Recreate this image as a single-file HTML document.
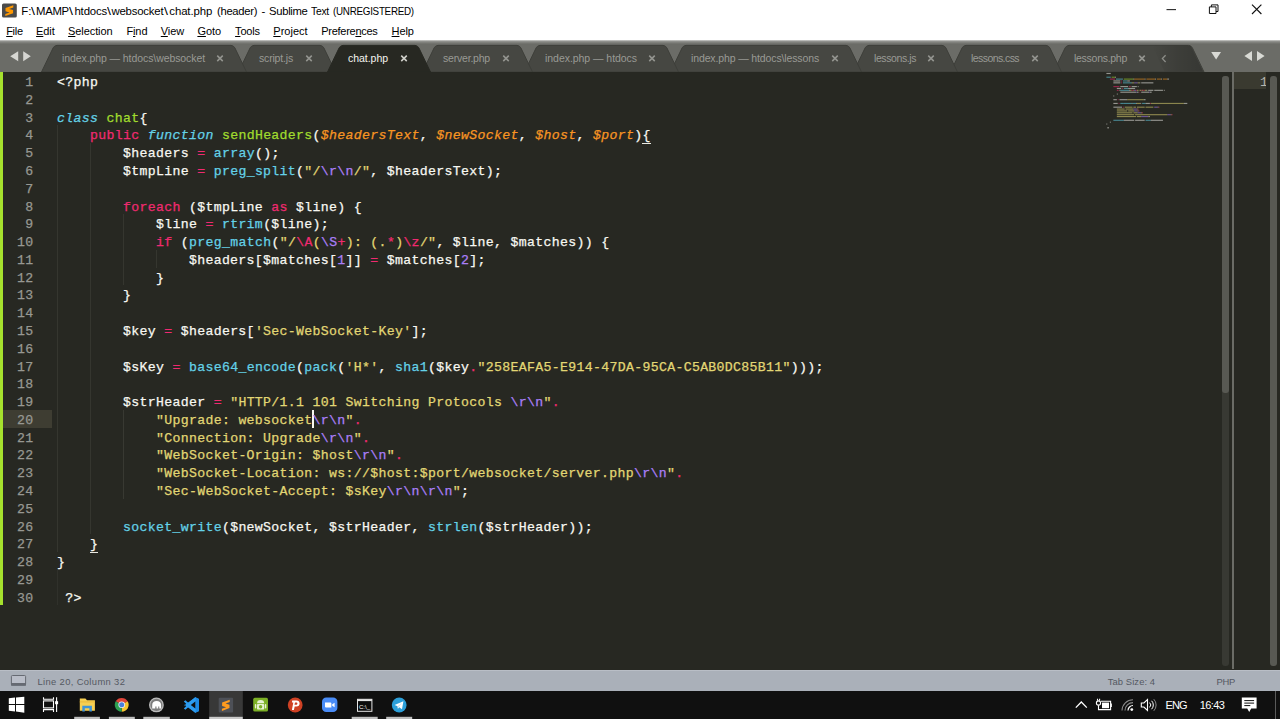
<!DOCTYPE html>
<html lang="en">
<head>
<meta charset="utf-8">
<title>F:\MAMP\htdocs\websocket\chat.php (header) - Sublime Text (UNREGISTERED)</title>
<style>
*{box-sizing:border-box;margin:0;padding:0}
html,body{width:1280px;height:719px;overflow:hidden;background:#272822}
body{position:relative;font-family:"Liberation Sans",sans-serif;-webkit-font-smoothing:antialiased}
.abs{position:absolute}
/* title bar */
#title{left:0;top:0;width:1280px;height:22px;background:#fff}
#title .t span{position:absolute;top:0;white-space:pre}
#title .t span.bs{transform:scaleX(1.25);transform-origin:0 0}
#title .t{left:21.3px;top:3.7px;font-size:11.4px;line-height:14px;color:#000;white-space:nowrap}
#menu{left:0;top:22px;width:1280px;height:18px;background:#fff;font-size:11px;color:#000}
#menu span{position:absolute;top:1.8px;line-height:14px;white-space:nowrap}
#menu u{text-decoration:underline;text-underline-offset:1px}
/* tab bar */
#tabbar{left:0;top:40px;width:1280px;height:32px;background:#6b6c67}
#tabbar .hl{left:0;top:0;width:1280px;height:3.5px;background:linear-gradient(#cfcfcd,#8b8c88 40%,#6b6c67)}
.tab{position:absolute;top:11px;font-size:10.5px;line-height:14px;color:#999a95;white-space:nowrap}
.tab.act{color:#f4f4f0}
.tx{position:absolute;top:10px;font-size:11px;line-height:14px;color:#a8a9a4}
/* editor */
#ed{left:0;top:72px;width:1280px;height:598px;background:#272822}
#green{left:0;top:0;width:3px;height:533px;background:#a5e12d}
.code{position:absolute;left:0;top:2.1px;-webkit-text-stroke:0.25px;z-index:1;font-family:"Liberation Mono",monospace;font-size:13.2px;letter-spacing:0.33px;line-height:17.78px;color:#f8f8f2;white-space:pre}
.ln{position:absolute;left:0;width:33.5px;text-align:right;color:#979892;height:17.78px}
.ln.cur{color:#979892}
.ul{position:relative;display:inline-block}
.ul::after{content:"";position:absolute;left:0;width:8.25px;top:15.6px;height:1px;background:#e8e8e2}
.l{position:absolute;left:57px;height:17.78px}
.k{color:#f02a70}.b{color:#64d2e8}.bi{color:#64d2e8;font-style:italic}.g{color:#a1dc2e}
.o{color:#f89522;font-style:italic}.s{color:#e2d774}.p{color:#aa7ff8}
.ig{position:absolute;width:1px;background:#34352f}
/* status */
#status{left:0;top:670px;width:1280px;height:21px;background:#aab0b9;box-shadow:inset 0 1px 0 #b9bec6;font-size:9.4px;color:#555962}
#status span{position:absolute;top:5.6px;line-height:12px;white-space:nowrap}
/* taskbar */
#task{left:0;top:691px;width:1280px;height:28px;background:#101010}
.tt{font-size:11px;line-height:14px;color:#fff;white-space:nowrap}
</style>
</head>
<body>
<div id="title" class="abs">
  <div class="t abs"><span style="left:-0.1px;letter-spacing:0.000px">F:</span><span class="bs" style="left:9.6px;letter-spacing:0.000px">\</span><span style="left:14.4px;letter-spacing:-0.300px;transform:scaleX(0.995);transform-origin:0 0">MAMP</span><span class="bs" style="left:47.9px;letter-spacing:0.000px">\</span><span style="left:53.1px;letter-spacing:-0.127px">htdocs</span><span class="bs" style="left:86.2px;letter-spacing:0.000px">\</span><span style="left:90.1px;letter-spacing:-0.192px">websocket</span><span class="bs" style="left:142.9px;letter-spacing:0.000px">\</span><span style="left:148.0px;letter-spacing:-0.100px">chat.php </span><span style="left:195.3px;letter-spacing:-0.300px;transform:scaleX(0.986);transform-origin:0 0">(header) </span><span style="left:240.3px;letter-spacing:-0.197px">- </span><span style="left:247.5px;letter-spacing:-0.300px;transform:scaleX(0.988);transform-origin:0 0">Sublime </span><span style="left:290.1px;letter-spacing:-0.300px;transform:scaleX(0.909);transform-origin:0 0">Text </span><span style="left:312.2px;letter-spacing:-0.300px;transform:scaleX(0.861);transform-origin:0 0">(UNREGISTERED)</span></div>
  <svg class="abs" style="left:0;top:0" width="1280" height="22" viewBox="0 0 1280 22">
  <rect x="2" y="3.4" width="14.8" height="14.2" rx="1.6" fill="#4b4b4b"/>
  <path d="M13.30 5.30 L5.50 7.90 L5.50 11.20 L9.60 12.40 L5.30 13.90 L5.30 16.00 L13.10 13.30 L13.10 10.00 L9.00 8.90 L13.30 7.50 Z" fill="#ff9800"/>
  <path d="M1166.5 9.65h9.5" stroke="#111" stroke-width="1" fill="none"/>
  <path d="M1209.4 6.9h6.6v6.6h-6.6zM1211.4 6.9v-2h6.6v6.6h-2" stroke="#111" stroke-width="1" fill="none"/>
  <path d="M1252 4.7l9.4 9.3M1261.4 4.7l-9.4 9.3" stroke="#111" stroke-width="1.15" fill="none"/>
</svg>

</div>
<div id="menu" class="abs">
<span style="left:6.2px;letter-spacing:-0.309px"><u>F</u>ile</span>
<span style="left:36.1px;letter-spacing:-0.117px"><u>E</u>dit</span>
<span style="left:68.1px;letter-spacing:-0.096px"><u>S</u>election</span>
<span style="left:126.4px;letter-spacing:-0.102px">F<u>i</u>nd</span>
<span style="left:160.8px;letter-spacing:-0.114px"><u>V</u>iew</span>
<span style="left:197.4px;letter-spacing:-0.065px"><u>G</u>oto</span>
<span style="left:235.1px;letter-spacing:-0.197px"><u>T</u>ools</span>
<span style="left:273.3px;letter-spacing:0.007px"><u>P</u>roject</span>
<span style="left:321.3px;letter-spacing:-0.283px">Prefere<u>n</u>ces</span>
<span style="left:391.6px;letter-spacing:-0.081px"><u>H</u>elp</span>
</div>
<div id="tabbar" class="abs">
  <div class="hl abs"></div>
  <svg class="abs" style="left:0;top:0" width="1280" height="32" viewBox="0 0 1280 32">
<defs><linearGradient id="tg" x1="0" x2="1" y1="0" y2="0"><stop offset="0" stop-color="#000" stop-opacity="0"/><stop offset="0.5" stop-color="#000" stop-opacity="0.13"/><stop offset="1" stop-color="#000" stop-opacity="0.22"/></linearGradient></defs>
<path d="M1053.50 32 L1065.10 7.9 Q1066.50 5.4,1069.00 5.4 L1188.50 5.4 Q1191.00 5.4,1192.40 7.9 L1204.00 32 Z" fill="#464742" stroke="#3d3e39" stroke-width="1"/>
<path d="M950.50 32 L962.10 7.9 Q963.50 5.4,966.00 5.4 L1046.00 5.4 Q1048.50 5.4,1049.90 7.9 L1061.50 32 Z" fill="#464742" stroke="#3d3e39" stroke-width="1"/>
<path d="M853.50 32 L865.10 7.9 Q866.50 5.4,869.00 5.4 L942.00 5.4 Q944.50 5.4,945.90 7.9 L957.50 32 Z" fill="#464742" stroke="#3d3e39" stroke-width="1"/>
<path d="M670.50 32 L682.10 7.9 Q683.50 5.4,686.00 5.4 L846.00 5.4 Q848.50 5.4,849.90 7.9 L861.50 32 Z" fill="#464742" stroke="#3d3e39" stroke-width="1"/>
<path d="M524.50 32 L536.10 7.9 Q537.50 5.4,540.00 5.4 L663.00 5.4 Q665.50 5.4,666.90 7.9 L678.50 32 Z" fill="#464742" stroke="#3d3e39" stroke-width="1"/>
<path d="M422.50 32 L434.10 7.9 Q435.50 5.4,438.00 5.4 L517.00 5.4 Q519.50 5.4,520.90 7.9 L532.50 32 Z" fill="#464742" stroke="#3d3e39" stroke-width="1"/>
<path d="M238.50 32 L250.10 7.9 Q251.50 5.4,254.00 5.4 L320.00 5.4 Q322.50 5.4,323.90 7.9 L335.50 32 Z" fill="#464742" stroke="#3d3e39" stroke-width="1"/>
<path d="M41.50 32 L53.10 7.9 Q54.50 5.4,57.00 5.4 L231.00 5.4 Q233.50 5.4,234.90 7.9 L246.50 32 Z" fill="#464742" stroke="#3d3e39" stroke-width="1"/>
<path d="M1152 5.5 L1190.5 5.5 L1203 31.5 L1164.5 31.5 Z" fill="url(#tg)"/>
<path d="M327.50 32 L339.10 7.9 Q340.50 5.4,343.00 5.4 L415.00 5.4 Q417.50 5.4,418.90 7.9 L430.50 32 Z" fill="#272822" stroke="#272822" stroke-width="1"/>
<path d="M217.25 15.649999999999999L222.75 21.15M222.75 15.649999999999999L217.25 21.15" stroke="#93948f" stroke-width="1.55" fill="none"/>
<path d="M306.25 15.649999999999999L311.75 21.15M311.75 15.649999999999999L306.25 21.15" stroke="#93948f" stroke-width="1.55" fill="none"/>
<path d="M401.25 15.649999999999999L406.75 21.15M406.75 15.649999999999999L401.25 21.15" stroke="#d0d0ca" stroke-width="1.55" fill="none"/>
<path d="M503.25 15.649999999999999L508.75 21.15M508.75 15.649999999999999L503.25 21.15" stroke="#93948f" stroke-width="1.55" fill="none"/>
<path d="M649.25 15.649999999999999L654.75 21.15M654.75 15.649999999999999L649.25 21.15" stroke="#93948f" stroke-width="1.55" fill="none"/>
<path d="M832.25 15.649999999999999L837.75 21.15M837.75 15.649999999999999L832.25 21.15" stroke="#93948f" stroke-width="1.55" fill="none"/>
<path d="M928.25 15.649999999999999L933.75 21.15M933.75 15.649999999999999L928.25 21.15" stroke="#93948f" stroke-width="1.55" fill="none"/>
<path d="M1032.25 15.649999999999999L1037.75 21.15M1037.75 15.649999999999999L1032.25 21.15" stroke="#93948f" stroke-width="1.55" fill="none"/>
<path d="M1139.25 15.649999999999999L1144.75 21.15M1144.75 15.649999999999999L1139.25 21.15" stroke="#93948f" stroke-width="1.55" fill="none"/>
<path d="M18.2 11.3v10l-8-5zM23.2 11.3v10l7.6-5z" fill="#d6d6d2"/>
<path d="M1165.6 15.2l-3.2 3.4l3.2 3.4" stroke="#8d8e89" stroke-width="1.3" fill="none"/>
<path d="M1211.2 12h9.8l-4.9 7.5z" fill="#d9dad5"/>
<path d="M1252 11v10l-7.6-5zM1257 11v10l7.6-5z" fill="#d9dad5"/>
</svg>
<div class="tab" style="left:62px;letter-spacing:-0.084px">index.php — htdocs\websocket</div>
<div class="tab" style="left:259px;letter-spacing:-0.177px">script.js</div>
<div class="tab act" style="left:348px;letter-spacing:-0.037px">chat.php</div>
<div class="tab" style="left:443px;letter-spacing:-0.203px">server.php</div>
<div class="tab" style="left:545px;letter-spacing:-0.045px">index.php — htdocs</div>
<div class="tab" style="left:691px;letter-spacing:-0.128px">index.php — htdocs\lessons</div>
<div class="tab" style="left:874px;letter-spacing:-0.411px">lessons.js</div>
<div class="tab" style="left:971px;letter-spacing:-0.571px">lessons.css</div>
<div class="tab" style="left:1074px;letter-spacing:-0.277px">lessons.php</div>
</div>
<div id="ed" class="abs">
  <div id="green" class="abs"></div>
  <div class="code">
<div class="ln" style="top:0.00px">1</div>
<div class="l" style="top:0.00px">&lt;?php</div>
<div class="ln" style="top:17.78px">2</div>
<div class="ln" style="top:35.56px">3</div>
<div class="l" style="top:35.56px"><span class="bi">class</span> <span class="g">chat</span>{</div>
<div class="ln" style="top:53.34px">4</div>
<div class="l" style="top:53.34px">    <span class="k">public</span> <span class="bi">function</span> <span class="g">sendHeaders</span>(<span class="o">$headersText</span>, <span class="o">$newSocket</span>, <span class="o">$host</span>, <span class="o">$port</span>)<span class="ul">{</span></div>
<div class="ln" style="top:71.12px">5</div>
<div class="l" style="top:71.12px">        $headers <span class="k">=</span> <span class="b">array</span>();</div>
<div class="ln" style="top:88.90px">6</div>
<div class="l" style="top:88.90px">        $tmpLine <span class="k">=</span> <span class="b">preg_split</span>(<span class="s">"/</span><span class="p">\r\n</span><span class="s">/"</span>, $headersText);</div>
<div class="ln" style="top:106.68px">7</div>
<div class="ln" style="top:124.46px">8</div>
<div class="l" style="top:124.46px">        <span class="k">foreach</span> ($tmpLine <span class="k">as</span> $line) {</div>
<div class="ln" style="top:142.24px">9</div>
<div class="l" style="top:142.24px">            $line <span class="k">=</span> <span class="b">rtrim</span>($line);</div>
<div class="ln" style="top:160.02px">10</div>
<div class="l" style="top:160.02px">            <span class="k">if</span> (<span class="b">preg_match</span>(<span class="s">"/</span><span class="k">\A</span><span class="s">(</span><span class="p">\S</span><span class="k">+</span><span class="s">): (.</span><span class="k">*</span><span class="s">)</span><span class="k">\z</span><span class="s">/"</span>, $line, $matches)) {</div>
<div class="ln" style="top:177.80px">11</div>
<div class="l" style="top:177.80px">                $headers[$matches[<span class="p">1</span>]] <span class="k">=</span> $matches[<span class="p">2</span>];</div>
<div class="ln" style="top:195.58px">12</div>
<div class="l" style="top:195.58px">            }</div>
<div class="ln" style="top:213.36px">13</div>
<div class="l" style="top:213.36px">        }</div>
<div class="ln" style="top:231.14px">14</div>
<div class="ln" style="top:248.92px">15</div>
<div class="l" style="top:248.92px">        $key <span class="k">=</span> $headers[<span class="s">'Sec-WebSocket-Key'</span>];</div>
<div class="ln" style="top:266.70px">16</div>
<div class="ln" style="top:284.48px">17</div>
<div class="l" style="top:284.48px">        $sKey <span class="k">=</span> <span class="b">base</span><span class="b">64_encode</span>(<span class="b">pack</span>(<span class="s">'H*'</span>, <span class="b">sha1</span>($key<span class="k">.</span><span class="s">"258EAFA5-E914-47DA-95CA-C5AB0DC85B11"</span>)));</div>
<div class="ln" style="top:302.26px">18</div>
<div class="ln" style="top:320.04px">19</div>
<div class="l" style="top:320.04px">        $strHeader <span class="k">=</span> <span class="s">"HTTP/1.1 101 Switching Protocols </span><span class="p">\r\n</span><span class="s">"</span><span class="k">.</span></div>
<div class="ln cur" style="top:337.82px">20</div>
<div class="l" style="top:337.82px">            <span class="s">"Upgrade: websocket</span><span class="p">\r\n</span><span class="s">"</span><span class="k">.</span></div>
<div class="ln" style="top:355.60px">21</div>
<div class="l" style="top:355.60px">            <span class="s">"Connection: Upgrade</span><span class="p">\r\n</span><span class="s">"</span><span class="k">.</span></div>
<div class="ln" style="top:373.38px">22</div>
<div class="l" style="top:373.38px">            <span class="s">"WebSocket-Origin: $host</span><span class="p">\r\n</span><span class="s">"</span><span class="k">.</span></div>
<div class="ln" style="top:391.16px">23</div>
<div class="l" style="top:391.16px">            <span class="s">"WebSocket-Location: ws://$host:$port/websocket/server.php</span><span class="p">\r\n</span><span class="s">"</span><span class="k">.</span></div>
<div class="ln" style="top:408.94px">24</div>
<div class="l" style="top:408.94px">            <span class="s">"Sec-WebSocket-Accept: $sKey</span><span class="p">\r\n\r\n</span><span class="s">"</span>;</div>
<div class="ln" style="top:426.72px">25</div>
<div class="ln" style="top:444.50px">26</div>
<div class="l" style="top:444.50px">        <span class="b">socket_write</span>($newSocket, $strHeader, <span class="b">strlen</span>($strHeader));</div>
<div class="ln" style="top:462.28px">27</div>
<div class="l" style="top:462.28px">    <span class="ul">}</span></div>
<div class="ln" style="top:480.06px">28</div>
<div class="l" style="top:480.06px">}</div>
<div class="ln" style="top:497.84px">29</div>
<div class="ln" style="top:515.62px">30</div>
<div class="l" style="top:515.62px"> ?&gt;</div>
</div>
<svg class="abs" style="left:0;top:0" width="1222" height="70" viewBox="0 0 1222 70">
<rect x="1106.40" y="0.90" width="4.35" height="1.15" fill="#f8f8f2" opacity="0.52"/>
<rect x="1106.40" y="4.65" width="4.35" height="1.15" fill="#66d9ef" opacity="0.52"/>
<rect x="1111.62" y="4.65" width="3.48" height="1.15" fill="#a6e22e" opacity="0.52"/>
<rect x="1115.10" y="4.65" width="0.87" height="1.15" fill="#f8f8f2" opacity="0.52"/>
<rect x="1109.88" y="6.52" width="5.22" height="1.15" fill="#f92672" opacity="0.52"/>
<rect x="1115.97" y="6.52" width="6.96" height="1.15" fill="#66d9ef" opacity="0.52"/>
<rect x="1123.80" y="6.52" width="9.57" height="1.15" fill="#a6e22e" opacity="0.52"/>
<rect x="1133.37" y="6.52" width="0.87" height="1.15" fill="#f8f8f2" opacity="0.52"/>
<rect x="1134.24" y="6.52" width="10.44" height="1.15" fill="#fd971f" opacity="0.52"/>
<rect x="1144.68" y="6.52" width="0.87" height="1.15" fill="#f8f8f2" opacity="0.52"/>
<rect x="1146.42" y="6.52" width="8.70" height="1.15" fill="#fd971f" opacity="0.52"/>
<rect x="1155.12" y="6.52" width="0.87" height="1.15" fill="#f8f8f2" opacity="0.52"/>
<rect x="1156.86" y="6.52" width="4.35" height="1.15" fill="#fd971f" opacity="0.52"/>
<rect x="1161.21" y="6.52" width="0.87" height="1.15" fill="#f8f8f2" opacity="0.52"/>
<rect x="1162.95" y="6.52" width="4.35" height="1.15" fill="#fd971f" opacity="0.52"/>
<rect x="1167.30" y="6.52" width="0.87" height="1.15" fill="#f8f8f2" opacity="0.52"/>
<rect x="1168.17" y="6.52" width="0.87" height="1.15" fill="#f8f8f2" opacity="0.52"/>
<rect x="1113.36" y="8.39" width="6.96" height="1.15" fill="#f8f8f2" opacity="0.52"/>
<rect x="1121.19" y="8.39" width="0.87" height="1.15" fill="#f92672" opacity="0.52"/>
<rect x="1122.93" y="8.39" width="4.35" height="1.15" fill="#66d9ef" opacity="0.52"/>
<rect x="1127.28" y="8.39" width="2.61" height="1.15" fill="#f8f8f2" opacity="0.52"/>
<rect x="1113.36" y="10.27" width="6.96" height="1.15" fill="#f8f8f2" opacity="0.52"/>
<rect x="1121.19" y="10.27" width="0.87" height="1.15" fill="#f92672" opacity="0.52"/>
<rect x="1122.93" y="10.27" width="8.70" height="1.15" fill="#66d9ef" opacity="0.52"/>
<rect x="1131.63" y="10.27" width="0.87" height="1.15" fill="#f8f8f2" opacity="0.52"/>
<rect x="1132.50" y="10.27" width="1.74" height="1.15" fill="#e6db74" opacity="0.52"/>
<rect x="1134.24" y="10.27" width="3.48" height="1.15" fill="#ae81ff" opacity="0.52"/>
<rect x="1137.72" y="10.27" width="1.74" height="1.15" fill="#e6db74" opacity="0.52"/>
<rect x="1139.46" y="10.27" width="0.87" height="1.15" fill="#f8f8f2" opacity="0.52"/>
<rect x="1141.20" y="10.27" width="12.18" height="1.15" fill="#f8f8f2" opacity="0.52"/>
<rect x="1113.36" y="14.01" width="6.09" height="1.15" fill="#f92672" opacity="0.52"/>
<rect x="1120.32" y="14.01" width="7.83" height="1.15" fill="#f8f8f2" opacity="0.52"/>
<rect x="1129.02" y="14.01" width="1.74" height="1.15" fill="#f92672" opacity="0.52"/>
<rect x="1131.63" y="14.01" width="5.22" height="1.15" fill="#f8f8f2" opacity="0.52"/>
<rect x="1137.72" y="14.01" width="0.87" height="1.15" fill="#f8f8f2" opacity="0.52"/>
<rect x="1116.84" y="15.88" width="4.35" height="1.15" fill="#f8f8f2" opacity="0.52"/>
<rect x="1122.06" y="15.88" width="0.87" height="1.15" fill="#f92672" opacity="0.52"/>
<rect x="1123.80" y="15.88" width="4.35" height="1.15" fill="#66d9ef" opacity="0.52"/>
<rect x="1128.15" y="15.88" width="6.96" height="1.15" fill="#f8f8f2" opacity="0.52"/>
<rect x="1116.84" y="17.76" width="1.74" height="1.15" fill="#f92672" opacity="0.52"/>
<rect x="1119.45" y="17.76" width="0.87" height="1.15" fill="#f8f8f2" opacity="0.52"/>
<rect x="1120.32" y="17.76" width="8.70" height="1.15" fill="#66d9ef" opacity="0.52"/>
<rect x="1129.02" y="17.76" width="0.87" height="1.15" fill="#f8f8f2" opacity="0.52"/>
<rect x="1129.89" y="17.76" width="1.74" height="1.15" fill="#e6db74" opacity="0.52"/>
<rect x="1131.63" y="17.76" width="1.74" height="1.15" fill="#f92672" opacity="0.52"/>
<rect x="1133.37" y="17.76" width="0.87" height="1.15" fill="#e6db74" opacity="0.52"/>
<rect x="1134.24" y="17.76" width="1.74" height="1.15" fill="#ae81ff" opacity="0.52"/>
<rect x="1135.98" y="17.76" width="0.87" height="1.15" fill="#f92672" opacity="0.52"/>
<rect x="1136.85" y="17.76" width="1.74" height="1.15" fill="#e6db74" opacity="0.52"/>
<rect x="1139.46" y="17.76" width="1.74" height="1.15" fill="#e6db74" opacity="0.52"/>
<rect x="1141.20" y="17.76" width="0.87" height="1.15" fill="#f92672" opacity="0.52"/>
<rect x="1142.07" y="17.76" width="0.87" height="1.15" fill="#e6db74" opacity="0.52"/>
<rect x="1142.94" y="17.76" width="1.74" height="1.15" fill="#f92672" opacity="0.52"/>
<rect x="1144.68" y="17.76" width="1.74" height="1.15" fill="#e6db74" opacity="0.52"/>
<rect x="1146.42" y="17.76" width="0.87" height="1.15" fill="#f8f8f2" opacity="0.52"/>
<rect x="1148.16" y="17.76" width="5.22" height="1.15" fill="#f8f8f2" opacity="0.52"/>
<rect x="1154.25" y="17.76" width="8.70" height="1.15" fill="#f8f8f2" opacity="0.52"/>
<rect x="1163.82" y="17.76" width="0.87" height="1.15" fill="#f8f8f2" opacity="0.52"/>
<rect x="1120.32" y="19.63" width="15.66" height="1.15" fill="#f8f8f2" opacity="0.52"/>
<rect x="1135.98" y="19.63" width="0.87" height="1.15" fill="#ae81ff" opacity="0.52"/>
<rect x="1136.85" y="19.63" width="1.74" height="1.15" fill="#f8f8f2" opacity="0.52"/>
<rect x="1139.46" y="19.63" width="0.87" height="1.15" fill="#f92672" opacity="0.52"/>
<rect x="1141.20" y="19.63" width="7.83" height="1.15" fill="#f8f8f2" opacity="0.52"/>
<rect x="1149.03" y="19.63" width="0.87" height="1.15" fill="#ae81ff" opacity="0.52"/>
<rect x="1149.90" y="19.63" width="1.74" height="1.15" fill="#f8f8f2" opacity="0.52"/>
<rect x="1116.84" y="21.50" width="0.87" height="1.15" fill="#f8f8f2" opacity="0.52"/>
<rect x="1113.36" y="23.38" width="0.87" height="1.15" fill="#f8f8f2" opacity="0.52"/>
<rect x="1113.36" y="27.12" width="3.48" height="1.15" fill="#f8f8f2" opacity="0.52"/>
<rect x="1117.71" y="27.12" width="0.87" height="1.15" fill="#f92672" opacity="0.52"/>
<rect x="1119.45" y="27.12" width="7.83" height="1.15" fill="#f8f8f2" opacity="0.52"/>
<rect x="1127.28" y="27.12" width="16.53" height="1.15" fill="#e6db74" opacity="0.52"/>
<rect x="1143.81" y="27.12" width="1.74" height="1.15" fill="#f8f8f2" opacity="0.52"/>
<rect x="1113.36" y="30.87" width="4.35" height="1.15" fill="#f8f8f2" opacity="0.52"/>
<rect x="1118.58" y="30.87" width="0.87" height="1.15" fill="#f92672" opacity="0.52"/>
<rect x="1120.32" y="30.87" width="3.48" height="1.15" fill="#66d9ef" opacity="0.52"/>
<rect x="1123.80" y="30.87" width="7.83" height="1.15" fill="#66d9ef" opacity="0.52"/>
<rect x="1131.63" y="30.87" width="0.87" height="1.15" fill="#f8f8f2" opacity="0.52"/>
<rect x="1132.50" y="30.87" width="3.48" height="1.15" fill="#66d9ef" opacity="0.52"/>
<rect x="1135.98" y="30.87" width="0.87" height="1.15" fill="#f8f8f2" opacity="0.52"/>
<rect x="1136.85" y="30.87" width="3.48" height="1.15" fill="#e6db74" opacity="0.52"/>
<rect x="1140.33" y="30.87" width="0.87" height="1.15" fill="#f8f8f2" opacity="0.52"/>
<rect x="1142.07" y="30.87" width="3.48" height="1.15" fill="#66d9ef" opacity="0.52"/>
<rect x="1145.55" y="30.87" width="4.35" height="1.15" fill="#f8f8f2" opacity="0.52"/>
<rect x="1149.90" y="30.87" width="0.87" height="1.15" fill="#f92672" opacity="0.52"/>
<rect x="1150.77" y="30.87" width="33.06" height="1.15" fill="#e6db74" opacity="0.52"/>
<rect x="1183.83" y="30.87" width="3.48" height="1.15" fill="#f8f8f2" opacity="0.52"/>
<rect x="1113.36" y="34.61" width="8.70" height="1.15" fill="#f8f8f2" opacity="0.52"/>
<rect x="1122.93" y="34.61" width="0.87" height="1.15" fill="#f92672" opacity="0.52"/>
<rect x="1124.67" y="34.61" width="7.83" height="1.15" fill="#e6db74" opacity="0.52"/>
<rect x="1133.37" y="34.61" width="2.61" height="1.15" fill="#e6db74" opacity="0.52"/>
<rect x="1136.85" y="34.61" width="7.83" height="1.15" fill="#e6db74" opacity="0.52"/>
<rect x="1145.55" y="34.61" width="7.83" height="1.15" fill="#e6db74" opacity="0.52"/>
<rect x="1154.25" y="34.61" width="3.48" height="1.15" fill="#ae81ff" opacity="0.52"/>
<rect x="1157.73" y="34.61" width="0.87" height="1.15" fill="#e6db74" opacity="0.52"/>
<rect x="1158.60" y="34.61" width="0.87" height="1.15" fill="#f92672" opacity="0.52"/>
<rect x="1116.84" y="36.49" width="7.83" height="1.15" fill="#e6db74" opacity="0.52"/>
<rect x="1125.54" y="36.49" width="7.83" height="1.15" fill="#e6db74" opacity="0.52"/>
<rect x="1133.37" y="36.49" width="3.48" height="1.15" fill="#ae81ff" opacity="0.52"/>
<rect x="1136.85" y="36.49" width="0.87" height="1.15" fill="#e6db74" opacity="0.52"/>
<rect x="1137.72" y="36.49" width="0.87" height="1.15" fill="#f92672" opacity="0.52"/>
<rect x="1116.84" y="38.36" width="10.44" height="1.15" fill="#e6db74" opacity="0.52"/>
<rect x="1128.15" y="38.36" width="6.09" height="1.15" fill="#e6db74" opacity="0.52"/>
<rect x="1134.24" y="38.36" width="3.48" height="1.15" fill="#ae81ff" opacity="0.52"/>
<rect x="1137.72" y="38.36" width="0.87" height="1.15" fill="#e6db74" opacity="0.52"/>
<rect x="1138.59" y="38.36" width="0.87" height="1.15" fill="#f92672" opacity="0.52"/>
<rect x="1116.84" y="40.23" width="15.66" height="1.15" fill="#e6db74" opacity="0.52"/>
<rect x="1133.37" y="40.23" width="4.35" height="1.15" fill="#e6db74" opacity="0.52"/>
<rect x="1137.72" y="40.23" width="3.48" height="1.15" fill="#ae81ff" opacity="0.52"/>
<rect x="1141.20" y="40.23" width="0.87" height="1.15" fill="#e6db74" opacity="0.52"/>
<rect x="1142.07" y="40.23" width="0.87" height="1.15" fill="#f92672" opacity="0.52"/>
<rect x="1116.84" y="42.11" width="17.40" height="1.15" fill="#e6db74" opacity="0.52"/>
<rect x="1135.11" y="42.11" width="32.19" height="1.15" fill="#e6db74" opacity="0.52"/>
<rect x="1167.30" y="42.11" width="3.48" height="1.15" fill="#ae81ff" opacity="0.52"/>
<rect x="1170.78" y="42.11" width="0.87" height="1.15" fill="#e6db74" opacity="0.52"/>
<rect x="1171.65" y="42.11" width="0.87" height="1.15" fill="#f92672" opacity="0.52"/>
<rect x="1116.84" y="43.98" width="19.14" height="1.15" fill="#e6db74" opacity="0.52"/>
<rect x="1136.85" y="43.98" width="4.35" height="1.15" fill="#e6db74" opacity="0.52"/>
<rect x="1141.20" y="43.98" width="6.96" height="1.15" fill="#ae81ff" opacity="0.52"/>
<rect x="1148.16" y="43.98" width="0.87" height="1.15" fill="#e6db74" opacity="0.52"/>
<rect x="1149.03" y="43.98" width="0.87" height="1.15" fill="#f8f8f2" opacity="0.52"/>
<rect x="1113.36" y="47.73" width="10.44" height="1.15" fill="#66d9ef" opacity="0.52"/>
<rect x="1123.80" y="47.73" width="10.44" height="1.15" fill="#f8f8f2" opacity="0.52"/>
<rect x="1135.11" y="47.73" width="9.57" height="1.15" fill="#f8f8f2" opacity="0.52"/>
<rect x="1145.55" y="47.73" width="5.22" height="1.15" fill="#66d9ef" opacity="0.52"/>
<rect x="1150.77" y="47.73" width="12.18" height="1.15" fill="#f8f8f2" opacity="0.52"/>
<rect x="1109.88" y="49.60" width="0.87" height="1.15" fill="#f8f8f2" opacity="0.52"/>
<rect x="1106.40" y="51.47" width="0.87" height="1.15" fill="#f8f8f2" opacity="0.52"/>
<rect x="1107.27" y="55.22" width="1.74" height="1.15" fill="#f8f8f2" opacity="0.52"/>
</svg><div class="abs" style="left:3px;top:337.82px;width:49px;height:17.78px;background:#3e3d32;z-index:0"></div>
<div class="ig" style="left:57px;top:53.34px;height:426.72px;background:#35362f"></div>
<div class="ig" style="left:57px;top:497.84px;height:35.56px;background:#30312b"></div>
<div class="ig" style="left:90px;top:71.12px;height:391.16px;background:#35362f"></div>
<div class="ig" style="left:123px;top:142.24px;height:71.12px;background:#35362f"></div>
<div class="ig" style="left:123px;top:337.82px;height:88.90px;background:#383932"></div>
<div class="ig" style="left:156px;top:177.80px;height:17.78px;background:#35362f"></div>
<div class="abs" style="left:312.3px;top:338.12px;width:1.6px;height:18.38px;background:#f8f8f0"></div>
<div class="abs" style="left:1221.5px;top:3.5px;width:7.5px;height:590px;background:#383933;border-radius:3px"></div>
<div class="abs" style="left:1222px;top:3.5px;width:6.5px;height:317px;background:#585953;border-radius:3px"></div>
<div class="abs" style="left:1232px;top:0;width:2px;height:597px;background:#6b6c66"></div>
<div class="abs" style="left:1234px;top:0;width:32.3px;height:17px;background:#3a3a30"></div>
<div class="abs" style="left:1250px;top:2.1px;width:16.3px;height:17.76px;overflow:hidden;font-family:'Liberation Mono',monospace;font-size:13.2px;line-height:17.78px;color:#b4b4ae;text-align:left;padding-left:10px">1</div>
<div class="abs" style="left:1270px;top:3.5px;width:6.5px;height:590px;background:#585953;border-radius:3px"></div>
</div>
<div id="status" class="abs">
<span style="left:37.4px;letter-spacing:0.366px">Line 20, Column 32</span>
<span style="left:1107.7px;letter-spacing:0.101px">Tab Size: 4</span>
<span style="left:1216.4px;letter-spacing:-0.160px">PHP</span><svg class="abs" style="left:0;top:0" width="40" height="21" viewBox="0 670 40 21"><rect x="11.4" y="675.5" width="14.2" height="9.6" rx="1" fill="#b9bdc7" stroke="#666a72" stroke-width="1"/><rect x="11" y="683" width="15" height="2.7" fill="#666a72"/></svg>

</div>
<div id="task" class="abs">
  <svg class="abs" style="left:0;top:0" width="1280" height="28" viewBox="0 691 1280 28">
  <!-- active button bg -->
  <rect x="209.2" y="691" width="33.6" height="26" fill="#383838"/>
  <!-- running indicators -->
  <g fill="#bdbdbd">
    <rect x="74.2" y="716.8" width="25.7" height="2.2"/>
    <rect x="108.9" y="716.8" width="25.9" height="2.2"/>
    <rect x="143.3" y="716.8" width="26.5" height="2.2"/>
    <rect x="209.2" y="716.8" width="33.6" height="2.2" fill="#c9c9c9"/>
    <rect x="351.7" y="716.8" width="26" height="2.2"/>
    <rect x="386.2" y="716.8" width="26" height="2.2"/>
  </g>
  <!-- windows logo -->
  <g fill="#fff">
    <path d="M8.8 698.3 L15 697.5 L15 704 L8.8 704 Z"/>
    <path d="M16 697.4 L24.3 696.8 L24.3 704 L16 704 Z"/>
    <path d="M8.8 704.9 L15 704.9 L15 711.5 L8.8 710.7 Z"/>
    <path d="M16 704.9 L24.3 704.9 L24.3 712.7 L16 711.6 Z"/>
  </g>
  <!-- task view -->
  <g stroke="#fff" stroke-width="1.1" fill="none">
    <rect x="43.5" y="700.9" width="10" height="7"/>
    <path d="M43.5 697.2v2.1h10v-2.1M43.5 712v-2.4h10v2.4M56.6 697.2v14.8"/>
  </g>
  <rect x="55.1" y="701.2" width="3" height="3" fill="#fff"/>
  <!-- file explorer -->
  <path d="M79.8 698.6 h5.6 l1.6 1.6 h7.9 v10.6 h-15.1 z" fill="#f7cf52"/>
  <path d="M79.8 701.4 h15.1 v1 h-15.1z" fill="#e9b93c"/>
  <path d="M82.3 705.7 h9.6 v5.9 h-2.5 v-3.3 h-4.6 v3.3 h-2.5 z" fill="#3f94d8"/>
  <!-- chrome -->
  <g>
    <path d="M121.7 704.8 L115.72 701.35 A6.9 6.9 0 0 1 127.68 701.35 Z" fill="#e0453a"/>
    <path d="M121.7 704.8 L127.68 701.35 A6.9 6.9 0 0 1 121.7 711.7 Z" fill="#f7c531"/>
    <path d="M121.7 704.8 L121.7 711.7 A6.9 6.9 0 0 1 115.72 701.35 Z" fill="#2d9f51"/>
    <path d="M121.7 701.5 L128.2 701.5 L127.68 701.35 L121.7 700.5 Z" fill="#e0453a"/>
    <circle cx="121.7" cy="704.8" r="3.3" fill="#eef3f8"/>
    <circle cx="121.7" cy="704.8" r="2.5" fill="#4a7fdc"/>
  </g>
  <!-- MAMP -->
  <circle cx="156.4" cy="704.9" r="7.4" fill="#bcbcbc"/>
  <circle cx="156.4" cy="704.9" r="6.1" fill="#7d7d7d"/>
  <path d="M152.2 708.4 v-3.4 c0-2.7 1.9-4.1 4.4-4.1 c2.7 0 4.5 1.5 4.5 3.9 v3.6 h-1.8 v-1.9 h-1.1 v1.9 h-1.7 v-1.9 h-1.2 v1.9 z" fill="#fff"/>
  <!-- VS Code -->
  <path d="M195.3 697.3 L199 699 V711 L195.3 712.7 L184 704.6 L184 705.4 Z" fill="#2d9cf0"/>
  <path d="M195.3 697.3 L199 699 V711 L195.3 712.7 Z" fill="#1d8ae4"/>
  <path d="M195.3 697.3 L186.6 705 L195.3 712.7 L195.3 709 L190.6 705 L195.3 701 Z" fill="#2d9cf0"/>
  <path d="M183.8 701.6 l1.6 -1.3 l10 8.7 v3.7 z M183.8 708.4 l1.6 1.3 l10 -8.7 v-3.7 z" fill="#2d9cf0"/>
  <path d="M195.3 701.4 L190.8 705 L195.3 708.6 Z" fill="#101010"/>
  <!-- sublime -->
  <rect x="218.7" y="697.8" width="14.4" height="14.8" rx="1" fill="#4d5057"/>
  <path d="M229.69 699.78 L222.11 702.49 L222.11 705.93 L226.09 707.18 L221.91 708.74 L221.91 710.93 L229.50 708.12 L229.50 704.68 L225.51 703.53 L229.69 702.07 Z" fill="#ff9b1f"/>
  <!-- android green -->
  <rect x="253.2" y="697.8" width="14.8" height="13.8" rx="1.6" fill="#7cb026"/>
  <path d="M257 703.3 a3.6 3.4 0 0 1 7.2 0 z" fill="#e8f2d4"/>
  <rect x="257" y="704" width="7.2" height="5.6" rx="0.8" fill="#e8f2d4"/>
  <rect x="254.9" y="704" width="1.4" height="4.4" rx="0.7" fill="#e8f2d4"/>
  <rect x="264.9" y="704" width="1.4" height="4.4" rx="0.7" fill="#e8f2d4"/>
  <circle cx="260.6" cy="706.7" r="1.7" fill="#7cb026"/>
  <!-- psiphon -->
  <circle cx="295.2" cy="705" r="7.4" fill="#cf4124"/>
  <path d="M292.2 700.6 h4.3 c2 0 3.1 1.1 3.1 2.8 c0 1.8-1.2 3-3.2 3 h-1.7 l-0.8 3.6 h-2 l1.4-7.6 h-1.4 z M295 702.4 l-0.5 2.3 h1.5 c0.9 0 1.4-0.5 1.4-1.3 c0-0.6-0.4-1-1.2-1 z" fill="#fff"/>
  <!-- zoom -->
  <rect x="322" y="697.5" width="15.4" height="14.6" rx="4.2" fill="#4a8cf7"/>
  <path d="M325 702.6 h5.4 a1 1 0 0 1 1 1 v3.8 h-5.4 a1 1 0 0 1 -1 -1 z M332.2 704.2 l2.4 -1.5 v4.6 l-2.4 -1.5 z" fill="#fff"/>
  <!-- cmd -->
  <rect x="357.5" y="699.3" width="14.4" height="12" fill="#0c0c0c" stroke="#e6e6e6" stroke-width="1"/>
  <rect x="357.5" y="699.3" width="14.4" height="1.8" fill="#e6e6e6"/>
  <text x="359" y="709" font-family="Liberation Sans, sans-serif" font-size="6" fill="#fff" textLength="11" lengthAdjust="spacingAndGlyphs">C:\_</text>
  <!-- telegram -->
  <circle cx="399.2" cy="705" r="7.4" fill="#2c9fd9"/>
  <path d="M394.6 704.9 L403.4 701.2 L402 709.2 L399.2 707.2 L397.9 708.7 L397.6 706.3 Z" fill="#fff"/>
  <path d="M397.6 706.3 L402.2 702.4 L398.6 706.9 L397.9 708.7 Z" fill="#c9e2f0"/>
  <!-- tray -->
  <path d="M1075.8 707.6 L1081.3 702 L1086.8 707.6" stroke="#fff" stroke-width="1.3" fill="none"/>
  <!-- battery / plug -->
  <g stroke="#fff" stroke-width="1.1" fill="none">
    <path d="M1101 701.2h9.6v8.4h-12.1v-4.4"/>
    <path d="M1111.3 703.6v3.4"/>
    <path d="M1097.5 698.8v2M1099.6 698.8v2"/>
    <circle cx="1098.5" cy="703" r="2.1"/>
  </g>
  <rect x="1102" y="702.6" width="7" height="5.6" fill="#fff"/>
  <!-- wifi -->
  <g stroke="#8a8a8a" stroke-width="1.1" fill="none">
    <path d="M1122 710.5 A11 11 0 0 1 1133 699.8"/>
    <path d="M1125 710.5 A8 8 0 0 1 1133 702.6"/>
  </g>
  <path d="M1128 710.5 A5 5 0 0 1 1133 705.5" stroke="#fff" stroke-width="1.2" fill="none"/>
  <circle cx="1131.8" cy="709.6" r="1.4" fill="#fff"/>
  <!-- volume -->
  <path d="M1141.3 703h2.6l3.6-3.4v10.8l-3.6-3.4h-2.6z" stroke="#fff" stroke-width="1.1" fill="none"/>
  <path d="M1149.6 702.6a3.3 3.3 0 0 1 0 4.8M1151.6 700.8a6 6 0 0 1 0 8.4" stroke="#fff" stroke-width="1" fill="none"/>
  <path d="M1153.8 699.2a8.4 8.4 0 0 1 0 11.6" stroke="#8a8a8a" stroke-width="1" fill="none"/>
  <!-- notification -->
  <path d="M1241.8 697.6h14.8v11h-5.4l-2 3.3l-2-3.3h-5.4z" fill="#fff"/>
  <path d="M1244.3 700.6h9.8M1244.3 703.1h9.8M1244.3 705.6h6" stroke="#101010" stroke-width="1" fill="none"/>
  <rect x="1275" y="690" width="1" height="29" fill="#5a5a5a"/>
</svg>
<div class="abs tt" style="left:1165.5px;top:6.8px;letter-spacing:-0.85px">ENG</div>
<div class="abs tt" style="left:1199.8px;top:6.8px;letter-spacing:-0.62px">16:43</div>

</div>
</body>
</html>
